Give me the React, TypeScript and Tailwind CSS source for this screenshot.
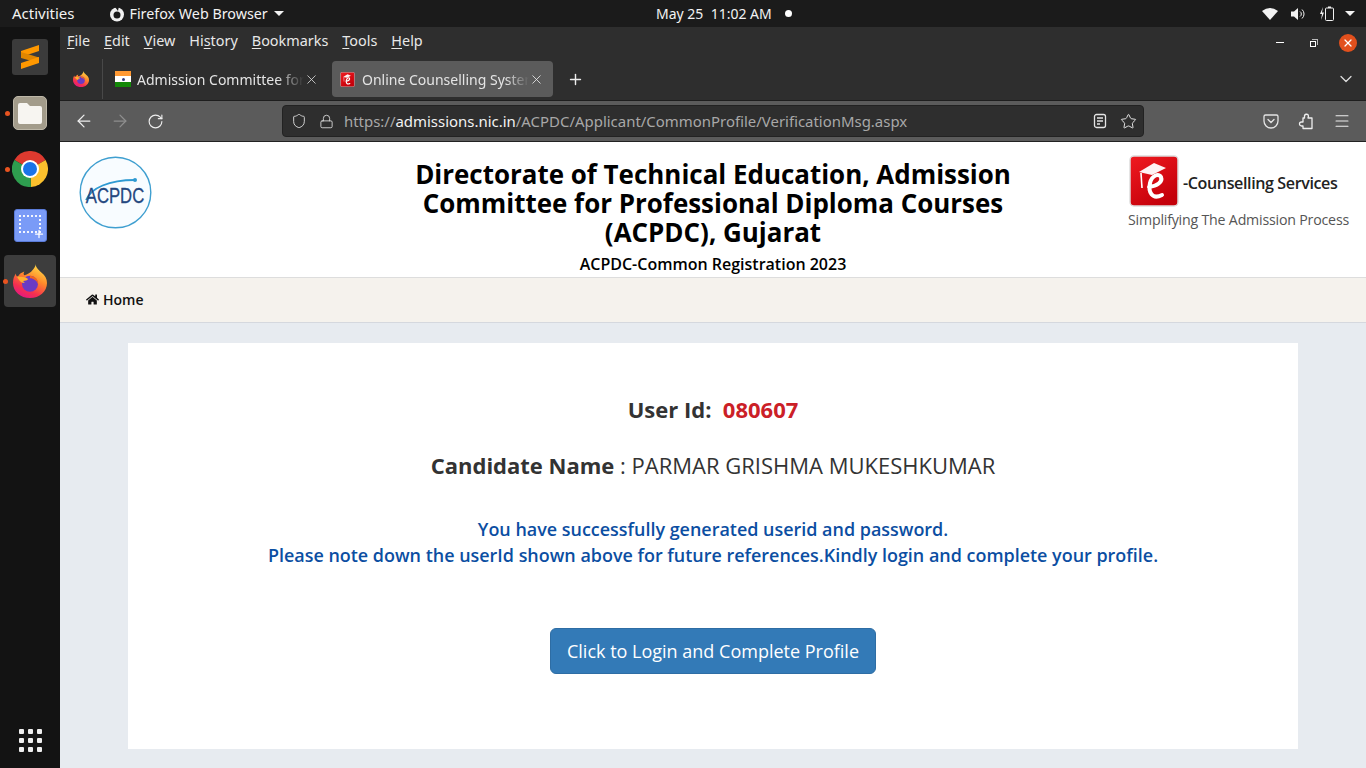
import React from 'react';
import { ArrowLeft, ArrowRight, RotateCw, Shield, Lock, Star, Menu, Plus, X, ChevronDown } from 'lucide-react';
import { FaHome } from 'react-icons/fa';

const FirefoxIcon: React.FC<{ size: number; id: string }> = ({ size, id }) => (
  <svg width={size} height={size} viewBox="0 0 36 36">
    <defs>
      <linearGradient id={id} x1="0.75" y1="0" x2="0.25" y2="1">
        <stop offset="0" stopColor="#ffe14a" />
        <stop offset="0.4" stopColor="#ff8a2a" />
        <stop offset="0.75" stopColor="#f5304f" />
        <stop offset="1" stopColor="#e31587" />
      </linearGradient>
    </defs>
    <path d="M24 0c0 4 3 6 6 9 4 3 6 7 6 11 0 9-8 16-18 16S0 29 0 20c0-4 1-7 3-10 0 2 1 3 2 4 1-3 4-5 7-6-1 2-1 3 0 4 3-1 7-3 9-6 2-2 3-4 3-6z" fill={`url(#${id})`} />
    <circle cx="18" cy="21" r="8.500" fill="#6a3bc4" />
    <path d="M18 12.500c5 0 9 4 8.500 9-1-4-5-6.500-8.500-6.500z" fill="#f2641e" />
    <path d="M4 13c4 1 9 0 12 3-1 1.500-3 2-5 2 0 1 1 2 2 2-4 1-7-3-9-7z" fill="#ffb02e" />
  </svg>
);

const EcsLogo: React.FC<{ size: number; id: string }> = ({ size, id }) => (
  <svg width={size} height={size} viewBox="0 0 50 52">
    <defs>
      <linearGradient id={id} x1="0" y1="0" x2="0.6" y2="1">
        <stop offset="0" stopColor="#f01a20" />
        <stop offset="1" stopColor="#c4000a" />
      </linearGradient>
    </defs>
    <rect x="1" y="1" width="48" height="50" rx="4" fill={`url(#${id})`} stroke="#dddddd" strokeWidth="1.500" />
    <path d="M10 17 L25 8 L37 13 L23 20 Z" fill="#fff" opacity="0.95" />
    <path d="M12 18 L13 33" stroke="#fff" strokeWidth="1.600" fill="none" />
    <path d="M20 32 C28 31 34 27 32 22 C30 18 23 20 21 28 C19 37 23 45 33 40" stroke="#fff" strokeWidth="4" fill="none" strokeLinecap="round" />
  </svg>
);

const DockDot: React.FC = () => (
  <span className="absolute left-[5px] top-1/2 -mt-[2px] size-[5px] rounded-full bg-[#e95420]" />
);

const Dock: React.FC = () => (
  <aside className="flex w-[60px] shrink-0 flex-col items-center bg-[#131313] pt-[2px] pb-[16px]">
    <div className="flex h-[56px] w-full items-center justify-center">
      <div className="flex size-[36px] items-center justify-center rounded-[3px] bg-[#3b3b3b]">
        <svg width="20" height="26" viewBox="0 0 20 26">
          <path d="M1 7 L19 1 V7 L1 13 Z" fill="#ff9800" />
          <path d="M1 8 L19 13.500 V19 L1 14 Z" fill="#e08600" />
          <path d="M1 19 L19 13 V19 L1 25 Z" fill="#ff9800" />
        </svg>
      </div>
    </div>
    <div className="relative flex h-[56px] w-full items-center justify-center">
      <DockDot />
      <div className="flex size-[34px] items-center justify-center rounded-[5px] border border-[#bdb7a8] bg-[#a39c8b]">
        <svg width="26" height="23" viewBox="0 0 26 23">
          <path d="M3 1h7l3 3h10a2 2 0 0 1 2 2v14a2 2 0 0 1-2 2H3a2 2 0 0 1-2-2V3a2 2 0 0 1 2-2z" fill="#f7f5f1" />
        </svg>
      </div>
    </div>
    <div className="relative flex h-[56px] w-full items-center justify-center">
      <DockDot />
      <svg width="36" height="36" viewBox="0 0 36 36">
        <path d="M18 18 L2.400 9 A18 18 0 0 1 33.600 9 Z" fill="#dd3a2f" />
        <path d="M18 18 L33.600 9 A18 18 0 0 1 19 36 Z" fill="#fbc02d" />
        <path d="M18 18 L19 36 A18 18 0 0 1 2.400 9 Z" fill="#2e9e4f" />
        <circle cx="18" cy="18" r="9" fill="#fff" />
        <circle cx="18" cy="18" r="7" fill="#1a73e8" />
      </svg>
    </div>
    <div className="flex h-[56px] w-full items-center justify-center">
      <div className="relative size-[33px] rounded-[3px] border border-[#5a7bd8] bg-[#7a9bf7]">
        <div className="absolute left-[4px] top-[5px] h-[18px] w-[22px] border-2 border-dotted border-white/90" />
        <Plus className="absolute bottom-[1px] right-[1px] text-white" size={12} strokeWidth={2.5} />
      </div>
    </div>
    <div className="relative mt-[2px] flex h-[52px] w-[52px] items-center justify-center rounded-[4px] bg-[#3d3d3d]">
      <span className="absolute -left-[1px] top-1/2 -mt-[2px] size-[5px] rounded-full bg-[#e95420]" />
      <FirefoxIcon size={34} id="ffdock" />
    </div>
    <div className="mt-auto grid grid-cols-3 gap-[4px]">
      {Array.from({ length: 9 }).map((_, i) => (
        <span key={i} className="size-[5px] rounded-[1px] bg-[#eeeeee]" />
      ))}
    </div>
  </aside>
);

const TopBar: React.FC = () => (
  <header className="relative flex h-[27px] items-center bg-[#1b1b1b] text-[14px] text-[#f2f2f2]">
    <span className="ml-[12px] text-[15px]">Activities</span>
    <span className="ml-[34px] flex items-center gap-[5px] text-[14.300px]">
      <svg width="16" height="16" viewBox="0 0 16 16">
        <circle cx="8" cy="8.500" r="7" fill="#f0f0f0" />
        <circle cx="8" cy="9" r="3.500" fill="#1b1b1b" />
        <path d="M6 1 L10 0 L9 5 Z" fill="#1b1b1b" />
      </svg>
      Firefox Web Browser
      <span className="ml-[1px] border-x-[5px] border-t-[5px] border-x-transparent border-t-[#f2f2f2]" />
    </span>
    <span className="absolute left-[656px] flex items-center whitespace-pre">
      May 25  11:02 AM
      <span className="ml-[13px] size-[7px] rounded-full bg-white" />
    </span>
    <div className="ml-auto mr-[11px] flex items-center">
      <svg width="16" height="12" viewBox="0 0 16 12"><path d="M0 3 Q8 -3 16 3 L8 12 Z" fill="#f2f2f2" /></svg>
      <svg className="ml-[13px]" width="15" height="14" viewBox="0 0 15 14">
        <path d="M0 4.500h3L7 1v12L3 9.500H0z" fill="#f2f2f2" />
        <path d="M9 4.500a3 3 0 0 1 0 5M11 2.500a6 6 0 0 1 0 9" stroke="#f2f2f2" fill="none" />
      </svg>
      <svg className="ml-[13px]" width="15" height="15" viewBox="0 0 15 15">
        <path d="M4 1 L1 8 H3 L2 14 L5 6.500 H3 Z" fill="#f2f2f2" />
        <rect x="6.500" y="2" width="8" height="12.500" rx="1" fill="none" stroke="#f2f2f2" />
        <rect x="9" y="0.500" width="3" height="1.500" fill="#f2f2f2" />
      </svg>
      <span className="ml-[11px] border-x-[5px] border-t-[5px] border-x-transparent border-t-[#f2f2f2]" />
    </div>
  </header>
);

const menuItems: [string, string, string][] = [
  ['', 'F', 'ile'],
  ['', 'E', 'dit'],
  ['', 'V', 'iew'],
  ['Hi', 's', 'tory'],
  ['', 'B', 'ookmarks'],
  ['', 'T', 'ools'],
  ['', 'H', 'elp'],
];

const MenuBar: React.FC = () => (
  <div className="flex h-[33px] items-center bg-[#2e2e2e] pl-[7px] text-[14.400px] text-[#e8e8e8]">
    <div className="mb-[6px] flex gap-[14px]">
      {menuItems.map(([a, b, c]) => (
        <span key={b + c}>
          {a}
          <span className="underline underline-offset-2">{b}</span>
          {c}
        </span>
      ))}
    </div>
    <div className="mb-[2px] ml-auto flex items-center">
      <span className="h-[1px] w-[8px] bg-white" />
      <span className="relative ml-[26px] size-[8px]">
        <span className="absolute left-0 bottom-0 size-[6px] border border-white" />
        <span className="absolute right-0 top-0 size-[6px] border-t border-r border-[#bbbbbb]" />
      </span>
      <span className="ml-[21px] mr-[9px] flex size-[18px] items-center justify-center rounded-full bg-[#e2501d]">
        <X size={12} strokeWidth={2.5} className="text-white" />
      </span>
    </div>
  </div>
);

const TabStrip: React.FC = () => (
  <div className="flex h-[41px] items-center border-b border-[#1e1e1e] bg-[#2e2e2e] pb-[2px] text-[14px] text-[#e4e4e4]">
    <div className="flex w-[42px] justify-center">
      <FirefoxIcon size={16} id="fftab" />
    </div>
    <div className="h-[40px] w-px bg-[#484848]" />
    <div className="flex h-[36px] w-[229px] items-center pl-[12px]">
      <div className="flex h-[16px] w-[16px] flex-col">
        <span className="h-[5px] bg-[#ff9933]" />
        <span className="flex h-[6px] items-center justify-center bg-white"><span className="size-[3px] rounded-full bg-[#333b80]" /></span>
        <span className="h-[5px] bg-[#138808]" />
      </div>
      <span className="ml-[6px] w-[167px] overflow-hidden whitespace-nowrap [mask-image:linear-gradient(to_right,black_84%,transparent)]">Admission Committee for</span>
      <X size={15} strokeWidth={1.3} className="text-[#dddddd]" />
    </div>
    <div className="flex h-[36px] w-[221px] items-center rounded-[4px] bg-[#5b5b5b] pl-[8px]">
      <EcsLogo size={15} id="ecstab" />
      <span className="ml-[7px] w-[167px] overflow-hidden whitespace-nowrap [mask-image:linear-gradient(to_right,black_86%,transparent)]">Online Counselling System</span>
      <X size={15} strokeWidth={1.3} className="text-[#eeeeee]" />
    </div>
    <Plus size={17} className="ml-[14px] text-[#eeeeee]" />
    <ChevronDown size={20} strokeWidth={1.5} className="ml-auto mr-[10px] text-[#dddddd]" />
  </div>
);

const ReaderIcon: React.FC = () => (
  <svg width="16" height="16" viewBox="0 0 16 16" fill="none" stroke="#e4e4e4" strokeWidth="1.300">
    <rect x="2.500" y="1.500" width="11" height="13" rx="2" />
    <path d="M5 5h6M5 8h6M5 11h3" />
  </svg>
);

const PocketIcon: React.FC = () => (
  <svg width="16" height="16" viewBox="0 0 16 16" fill="none" stroke="#e4e4e4" strokeWidth="1.300">
    <path d="M2.500 2h11A1.500 1.500 0 0 1 15 3.500V8a7 7 0 0 1-14 0V3.500A1.500 1.500 0 0 1 2.500 2z" />
    <path d="M5 6.500 L8 9.500 L11 6.500" strokeLinecap="round" />
  </svg>
);

const PuzzleIcon: React.FC = () => (
  <svg width="16" height="17" viewBox="0 0 16 17" fill="none" stroke="#eeeeee" strokeWidth="1.300" strokeLinejoin="round">
    <path d="M6.500 5 V3.500 A2 2 0 0 1 10.500 3 L10 5 H14 V15.500 H5 V13 H3.500 A2 2 0 0 1 3.500 9 H5 V5 Z" />
  </svg>
);

const Toolbar: React.FC = () => (
  <div className="flex h-[40px] items-center bg-[#5b5b5b]">
    <ArrowLeft size={20} strokeWidth={1.5} className="ml-[14px] text-[#eeeeee]" />
    <ArrowRight size={20} strokeWidth={1.5} className="ml-[16px] text-[#8f8f8f]" />
    <RotateCw size={17} strokeWidth={1.6} className="ml-[17px] text-[#eeeeee]" />
    <div className="ml-[118px] flex h-[32px] w-[862px] items-center rounded-[4px] border border-[#222222] bg-[#2e2e2e]">
      <Shield size={16} strokeWidth={1.4} className="ml-[8px] text-[#dddddd]" />
      <Lock size={15} strokeWidth={1.4} className="ml-[12px] text-[#dddddd]" />
      <span className="ml-[10px] whitespace-nowrap text-[14.950px] text-[#a8a8a8]">
        https://<span className="text-[#f2f2f2]">admissions.nic.in</span>/ACPDC/Applicant/CommonProfile/VerificationMsg.aspx
      </span>
      <div className="ml-auto mr-[6px] flex items-center gap-[12px]">
        <ReaderIcon />
        <Star size={17} strokeWidth={1.4} className="text-[#e4e4e4]" />
      </div>
    </div>
    <div className="ml-auto mr-[15px] flex items-center gap-[19px]">
      <PocketIcon />
      <PuzzleIcon />
      <Menu size={18} strokeWidth={1.4} className="text-[#eeeeee]" />
    </div>
  </div>
);

const AcpdcLogo: React.FC = () => (
  <svg width="73" height="73" viewBox="0 0 73 73">
    <circle cx="36.500" cy="36.500" r="35.300" fill="#f8fcff" stroke="#3f9fd0" strokeWidth="1.400" />
    <path d="M7 44 C12 32 30 24 56 24" stroke="#2f9ad2" strokeWidth="1.800" fill="none" />
    <circle cx="56" cy="24" r="2" fill="#2f9ad2" />
    <text transform="translate(36 47) scale(0.76 1)" textAnchor="middle" fontFamily="Liberation Sans, sans-serif" fontSize="22" fill="#25487f" stroke="#25487f" strokeWidth="0.300">ACPDC</text>
  </svg>
);

const PageHeader: React.FC = () => (
  <div className="flex h-[136px] items-start border-b border-[#dddddd] bg-white">
    <div className="w-[326px] pl-[19px] pt-[14px]">
      <AcpdcLogo />
    </div>
    <div className="w-[654px] pt-[18px] text-center font-['Open_Sans',sans-serif] text-black">
      <h1 className="text-[25.950px] font-bold leading-[29px]">
        Directorate of Technical Education, Admission Committee for Professional Diploma Courses (ACPDC), Gujarat
      </h1>
      <p className="mt-[6px] text-[16px] font-semibold leading-[22px]">ACPDC-Common Registration 2023</p>
    </div>
    <div className="flex-1 pl-[88px] pt-[13px] font-['Open_Sans',sans-serif] whitespace-nowrap">
      <div className="flex items-center">
        <EcsLogo size={52} id="ecshead" />
        <span className="ml-[3px] mt-[5px] text-[16.100px] font-semibold tracking-[-0.4px] text-[#222222]">-Counselling Services</span>
      </div>
      <p className="mt-[2px] text-[14.200px] tracking-[-0.2px] text-[#555555]">Simplifying The Admission Process</p>
    </div>
  </div>
);

const PageBody: React.FC = () => (
  <div className="flex-1 bg-[#e7ebf0] px-[68px] pt-[20px] font-['Open_Sans',sans-serif]">
    <div className="flex h-[406px] flex-col items-center bg-white pt-[51px] text-[#333333]">
      <p className="text-[22px] font-bold leading-[30px]">
        User Id:&nbsp; <span className="text-[#cb2027]">080607</span>
      </p>
      <p className="mt-[26px] text-[22px] leading-[30px]">
        <span className="font-bold">Candidate Name</span> : PARMAR GRISHMA MUKESHKUMAR
      </p>
      <div className="mt-[36px] text-center text-[17.950px] font-semibold leading-[26px] text-[#0b4ea2]">
        <p>You have successfully generated userid and password.</p>
        <p>Please note down the userId shown above for future references.Kindly login and complete your profile.</p>
      </div>
      <button className="mt-[60px] h-[46px] w-[326px] rounded-[6px] border border-[#2e6da4] bg-[#337ab7] text-[18px] text-white">
        Click to Login and Complete Profile
      </button>
    </div>
  </div>
);

export default function App() {
  return (
    <div className="flex h-[768px] w-[1366px] flex-col overflow-hidden font-['Noto_Sans',sans-serif]">
      <TopBar />
      <div className="flex min-h-0 flex-1">
        <Dock />
        <div className="flex min-w-0 flex-1 flex-col">
          <MenuBar />
          <TabStrip />
          <Toolbar />
          <div className="flex min-h-0 flex-1 flex-col border-t border-[#222222]">
            <PageHeader />
            <nav className="flex h-[45px] items-center gap-[4px] border-b border-[#d5d8de] bg-[#f5f2ed] pb-[2px] pl-[26px] font-['Open_Sans',sans-serif] text-[14px] font-semibold text-[#111111]">
              <FaHome size={13} /> Home
            </nav>
            <PageBody />
          </div>
        </div>
      </div>
    </div>
  );
}
